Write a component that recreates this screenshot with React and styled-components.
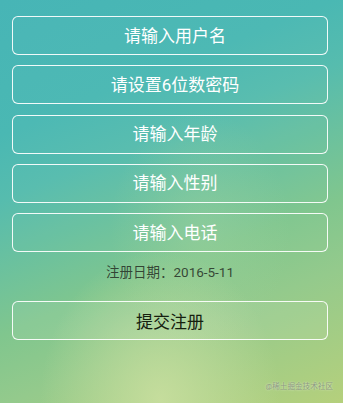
import styled, { createGlobalStyle } from "styled-components";

const GlobalStyle = createGlobalStyle`
  html, body {
    margin: 0;
    padding: 0;
  }
  body {
    font-family: Roboto, "Noto Sans CJK SC", sans-serif;
  }
`;

const Page = styled.div`
  position: relative;
  box-sizing: border-box;
  width: 343px;
  height: 403px;
  overflow: hidden;
  padding: 16px 15px 0 12px;
  display: flex;
  flex-direction: column;
  background:
    radial-gradient(ellipse 120px 150px at 160px 400px, rgba(206, 225, 162, 0.8), rgba(206, 225, 162, 0) 100%),
    radial-gradient(ellipse 90px 120px at 200px 230px, rgba(170, 214, 160, 0.35), rgba(170, 214, 160, 0) 100%),
    linear-gradient(158deg, #47b5b6 0%, #4ab8b3 25%, #56bcae 37%, #80c68e 62%, #94ca8c 75%, #b5d07c 100%);
`;

const Field = styled.input`
  box-sizing: border-box;
  width: 100%;
  height: 39px;
  margin: 0 0 10.25px;
  padding: 0 0 0 10px;
  border: 1px solid rgba(255, 255, 255, 0.92);
  border-radius: 6px;
  background: rgba(255, 255, 255, 0.02);
  color: #fff;
  font-family: inherit;
  font-size: 17px;
  text-align: center;
  outline: none;
  &::placeholder {
    color: #fff;
    opacity: 1;
  }
`;

const DateLine = styled.div`
  height: 20px;
  line-height: 20px;
  text-align: center;
  font-size: 13.5px;
  color: rgba(40, 50, 40, 0.88);
`;

const Submit = styled.button`
  box-sizing: border-box;
  width: 100%;
  height: 39px;
  margin-top: 19px;
  border: 1px solid rgba(255, 255, 255, 0.92);
  border-radius: 6px;
  background: rgba(255, 255, 255, 0.08);
  color: #15200f;
  font-family: inherit;
  font-size: 17px;
  cursor: pointer;
`;

const Watermark = styled.span`
  position: absolute;
  right: 10px;
  bottom: 12px;
  font-size: 7.6px;
  color: rgba(130, 140, 120, 0.85);
  text-shadow: 0 0 2px rgba(255, 255, 255, 0.7);
`;

const fields = ["请输入用户名", "请设置6位数密码", "请输入年龄", "请输入性别", "请输入电话"];

export default function App() {
  return (
    <>
      <GlobalStyle />
      <Page>
        {fields.map((f) => (
          <Field key={f} placeholder={f} />
        ))}
        <DateLine>注册日期：2016-5-11</DateLine>
        <Submit>提交注册</Submit>
        <Watermark>@稀土掘金技术社区</Watermark>
      </Page>
    </>
  );
}
